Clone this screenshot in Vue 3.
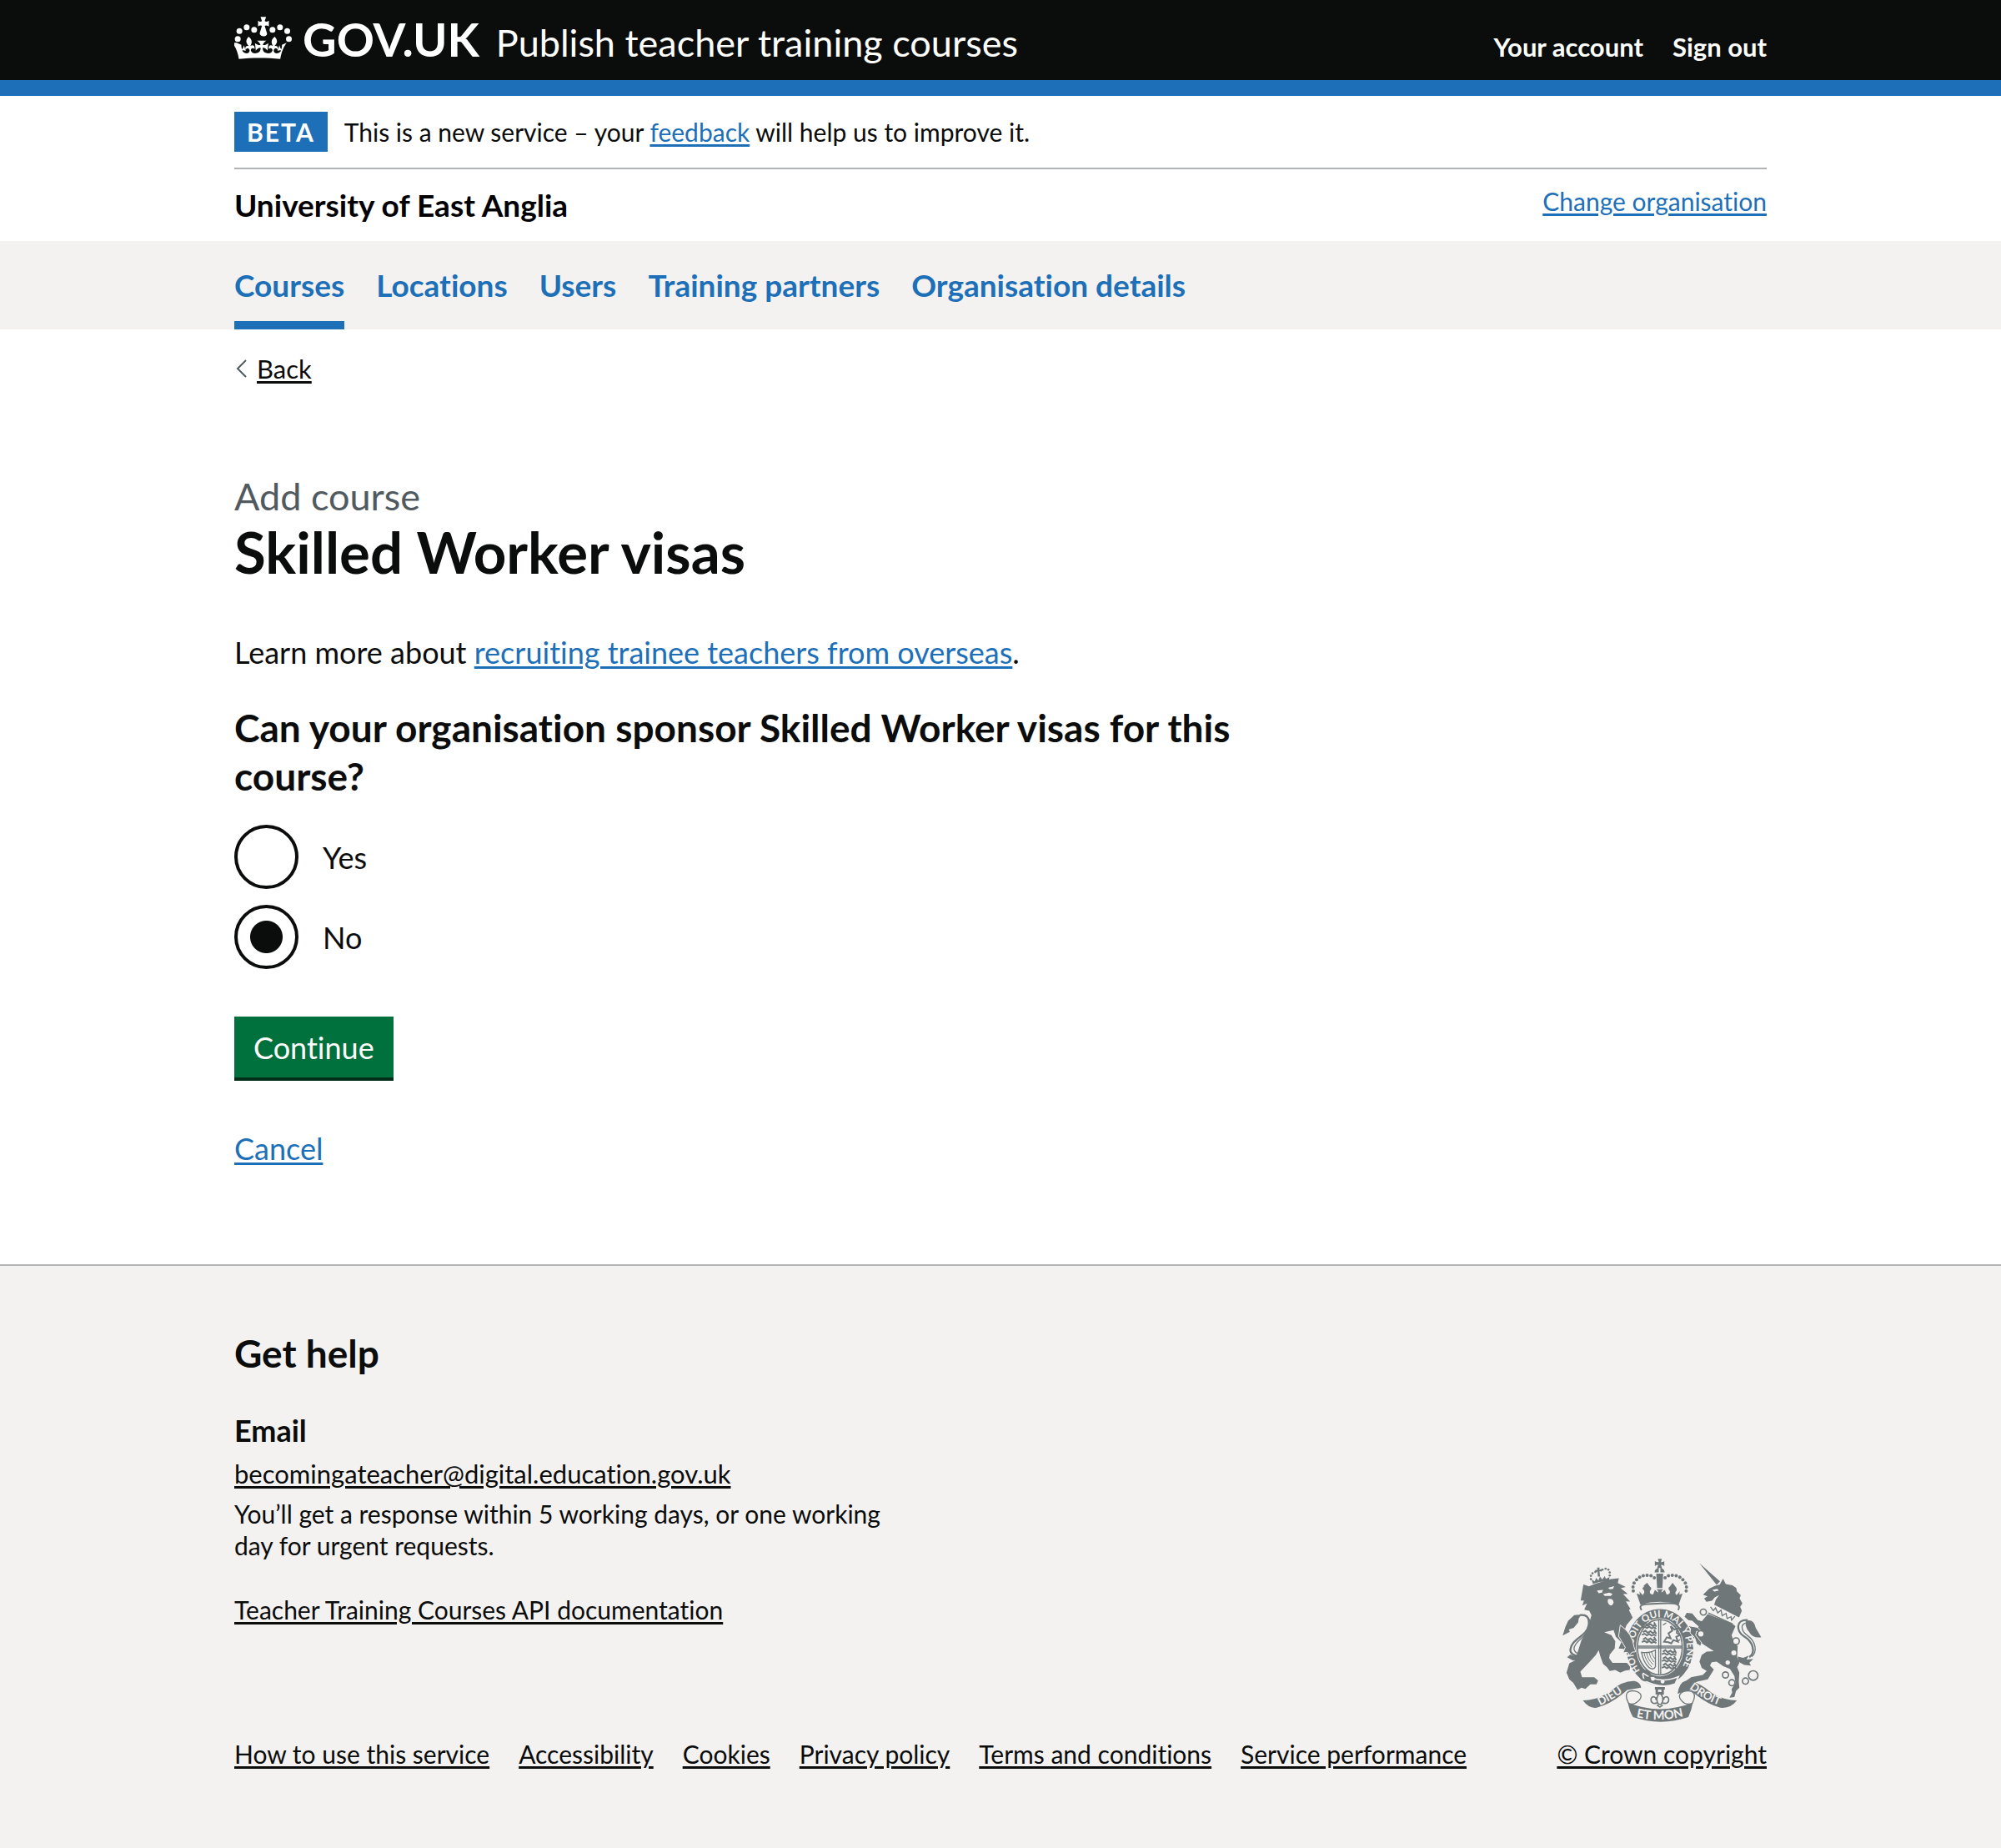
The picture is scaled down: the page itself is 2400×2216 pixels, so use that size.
<script setup>
import { ref } from 'vue'

const navItems = ['Courses', 'Locations', 'Users', 'Training partners', 'Organisation details']
const current = ref('Courses')
const footerLinks = [
  'How to use this service',
  'Accessibility',
  'Cookies',
  'Privacy policy',
  'Terms and conditions',
  'Service performance'
]
const sponsor = ref('no')

const crownPearls = [[74, 141], [80, 113], [106, 99], [133, 108]]
const archPearls = [
  [327, 167], [326, 152], [330, 138], [339, 126], [350, 117], [363, 112], [377, 110], [391, 112], [403, 119]
]
const lionCrownPearls = [
  [174, 124], [174, 112], [180, 103], [190, 98], [216, 90], [227, 86], [237, 90], [242, 100], [242, 111]
]
const chain = [
  [580, 243, 11], [571, 322, 12], [698, 348, 12], [660, 470, 11], [683, 498, 11], [732, 492, 11], [760, 472, 17]
]
const lions = [[362, 290], [362, 316], [362, 342], [434, 386], [434, 411], [434, 435]]
</script>

<template>
  <div class="page">
    <header class="header">
      <div class="container header-row">
        <a class="logo" href="#">
          <svg class="crown" viewBox="62 61 209 153" aria-hidden="true">
            <g fill="#fff">
              <template v-for="p in crownPearls" :key="p[0]">
                <circle :cx="p[0]" :cy="p[1]" r="10.5" />
                <circle :cx="332 - p[0]" :cy="p[1]" r="10.5" />
              </template>
              <path d="M156 62h20l-5 15c5 3 9 2 15-2v21c-6-4-10-5-15-2l8 26c3 15-26 15-26 0l8-26c-5-3-9-2-14 2V75c5 4 9 5 14 2z" />
              <path d="M70 155l17 7c0 7 0 12 3 16 3-4 5-9 6-14l7 20c-6-2-10-3-13-1 6 9 16 12 23 8 5-4 5-11 0-15-4-2-8-1-11 4-3-10 3-16 12-13-12-12-12-22-1-34 13 10 14 21 6 34 9-7 18-2 15 10-6-6-13-2-13 5 1 10 14 14 25 9 8-4 11-11 10-18-6-1-12 3-17 10l-3-27c7 6 13 8 20 7-2-7-7-12-13-16h34c-6 4-11 9-13 16 7 1 13-1 20-7l-3 27c-5-7-11-11-17-10-1 7 2 14 10 18 11 5 24 1 25-9 0-7-7-11-13-5-3-12 6-17 15-10-8-13-7-24 6-34 11 12 11 22-1 34 9-3 15 3 12 13-3-5-7-6-11-4-5 4-5 11 0 15 7 4 17 1 23-8-3-2-7-1-13 1l7-20c1 5 3 10 6 14 3-4 3-9 3-16l17-7c-10 13-19 33-23 58-48-5-101-5-149 0-4-25-13-45-24-58z" />
            </g>
          </svg>
          <span class="logo-text">GOV.UK</span>
        </a>
        <a class="service" href="#">Publish teacher training courses</a>
        <nav class="account" aria-label="Account">
          <a href="#">Your account</a>
          <a href="#">Sign out</a>
        </nav>
      </div>
    </header>

    <div class="container">
      <div class="phase">
        <strong class="tag">BETA</strong>
        <span>This is a new service – your <a class="link" href="#">feedback</a> will help us to improve it.</span>
      </div>
      <div class="organisation">
        <strong class="organisation-name">University of East Anglia</strong>
        <a class="link small" href="#">Change organisation</a>
      </div>
    </div>

    <nav class="primary" aria-label="Primary">
      <div class="container primary-list">
        <a
          v-for="item in navItems"
          :key="item"
          href="#"
          :class="{ active: item === current }"
          @click.prevent="current = item"
        >{{ item }}</a>
      </div>
    </nav>

    <div class="container">
      <div class="back">
        <svg class="chevron" viewBox="0 0 13 22" aria-hidden="true">
          <path d="M12 1L2 11l10 10" fill="none" stroke="#505a5f" stroke-width="2" />
        </svg>
        <a href="#">Back</a>
      </div>

      <main class="main">
        <h1>
          <span class="caption">Add course</span>
          Skilled Worker visas
        </h1>
        <p class="intro">Learn more about <a class="link" href="#">recruiting trainee teachers from overseas</a>.</p>
        <form @submit.prevent>
          <fieldset>
            <legend>Can your organisation sponsor Skilled Worker visas for this course?</legend>
            <div class="radios">
              <div class="radio">
                <input id="sponsor-yes" v-model="sponsor" type="radio" name="sponsor" value="yes">
                <label for="sponsor-yes">Yes</label>
              </div>
              <div class="radio">
                <input id="sponsor-no" v-model="sponsor" type="radio" name="sponsor" value="no">
                <label for="sponsor-no">No</label>
              </div>
            </div>
          </fieldset>
          <button type="submit">Continue</button>
        </form>
        <p><a class="link" href="#">Cancel</a></p>
      </main>
    </div>

    <footer class="footer">
      <div class="container footer-row">
        <div>
          <h2>Get help</h2>
          <h3>Email</h3>
          <p class="email"><a href="#">becomingateacher@digital.education.gov.uk</a></p>
          <p class="response">You’ll get a response within 5 working days, or one working day for urgent requests.</p>
          <p><a href="#">Teacher Training Courses API documentation</a></p>
          <div class="footer-links">
            <a v-for="link in footerLinks" :key="link" href="#">{{ link }}</a>
          </div>
        </div>
        <div class="copyright">
          <svg class="crest" viewBox="72 50 718 590" aria-hidden="true">
            <defs>
              <path id="garter-line" d="M352 454A97 115 0 1 1 490 460" />
              <path id="scroll-left" d="M207 580Q256 558 308 519" />
              <path id="scroll-right" d="M529 518Q586 563 648 583" />
              <path id="scroll-mid" d="M338 622Q423 642 512 618" />
            </defs>
            <g fill="#6f7779">
              <!-- lion -->
              <path d="M167 150l24-10 56-16 28-3-4 17 29 14-18 5 25 20-17 1 26 27-16-1 17 28-6 3 14 28-22 26-8 20 16 32 22 6 2 26-12 12-12-9-10 14-9-14-18-2 10-22-20-20-8-24-34 8 26 10 14 22-2 26-18 22-2 14 12 16 52 0 12 14-2 12-16 2-18 8-18-10-20 4-10-14-14-12-10-28-6-22-10 18-24 26-32 34 6 20 44 0 14 12-6 14-22 0-18 16-14-4-14 8-16-26-14-12-10-24 10-34 20-10 12-36 12-38 22-40 14-50-8-16-18-4 10-22-17 7 6-18-12 0 10-58z" />
              <path d="M72 328l10-32 10-22 22-20 26-2-10 14-2 14-16 20-18 6 4 8z" />
              <path d="M100 396l14 6 18-8 14 8-12 4 6 6-30 6-22-12z" />
              <!-- lion crown -->
              <path d="M181 141l-4-15 11 6 5-13 8 10 6-14 8 10 9-12 4 10 13-6-1 15q-30-2-59 9z" />
              <path d="M196 82h10l-2 8 9-2v9l-8-2 2 20h-8l-1-18-8 3v-9l8 0z" />
              <!-- unicorn -->
              <path d="M565 66l75 66-12 13z" />
              <path d="M579 180l22-22 22-10 16-4 12-22 10 20 24 4 14 10 2 12 14 14-4 12 10 18-8 12 6 14-10 24-90-46 6-18 12-16-16 8-10 12-20 4-8-12 12-8z" />
              <path d="M596 250l88 34 12 10-14 32 6 20 16 20-2 40 8 20-8 16 8 20-2 32 2 22-12 12-6 22-18 2 10-18-2-14 14-20-4-26-16-26-24-10-24-16-18 2-6 12 14 14-22 36-38 8-26 14-34 2 12-14 26-18 42-8 14-14-18-12-8-22 8-24 18-12 26-2-50-32-14-16-16 4 4 20-10 14-12-12 2-14-18-10 6-14 20-14 28-2 8-22z" />
              <path d="M598 300l-36-6-22-20-14-2-14-12 8-14 20 2 20 24 34 10z" />
              <path d="M733 274q30-8 36 26l20 34q-32 4-44-20-16-18-12-40z" />
              <path d="M704 404l20 4 20-8-8 14 24-2-14 14 6 10-24-2-22-12z" />
              <!-- imperial crown -->
              <path d="M405 59q8 5 14 4l-3-12h14l-3 12q6 1 12-4v18q-6-5-12-4l4 11h-18l4-11q-6-1-12 4zM404 100q0-14 15-17v17zM425 83q15 3 15 17h-15zM410 104h25l-3 52h-19z" />
              <path d="M339 176l12 4-2-12 12 14q12-14 0-22-2-7 4-7l0-6 12-10 10 14q10 6 0 16-2 14 12 12l6-16 12 10q2-6-6-12h24q-8 6-6 12l12-10 6 16q14 2 12-12-10-10 0-16l10-14 12 16q6 6 2 13-8 8 0 16l12-14-2 12 12-4-14 40q-68-20-138 0z" />
            </g>
            <g fill="none" stroke="#6f7779">
              <path d="M135 254q36-4 31 36c-6 42-62 48-66 88-2 20 20 24 40 26" stroke-width="7" />
              <path d="M149 252q26 12 22 40c-10 42-60 56-58 86q8 20 28 12" stroke-width="4" />
              <path d="M740 272c-44-4-42 42-14 58 34 20 44 58 20 76" stroke-width="7" />
              <path d="M732 282c-24 10-8 36 8 46 30 22 36 60 14 76" stroke-width="4" />
              <path d="M357 236c-14-24 6-20 66-24s78 2 66 24" stroke-width="6" fill="#f3f2f1" />
            </g>
            <g fill="#6f7779">
              <template v-for="p in archPearls" :key="p[0]">
                <circle :cx="p[0]" :cy="p[1]" r="6" />
                <circle :cx="845 - p[0]" :cy="p[1]" r="6" />
              </template>
              <circle v-for="(p, i) in lionCrownPearls" :key="i" :cx="p[0]" :cy="p[1]" r="4" />
            </g>

            <!-- garter and shield -->
            <ellipse cx="423" cy="370" rx="123" ry="140" fill="#6f7779" stroke="#f3f2f1" stroke-width="4" />
            <ellipse cx="423" cy="370" rx="86" ry="105" fill="#f3f2f1" />
            <ellipse cx="423" cy="370" rx="81" ry="100" fill="none" stroke="#6f7779" stroke-width="5" />
            <g fill="none" stroke="#6f7779" stroke-width="4">
              <path d="M419 272v196M426 272v196M343 366h160M343 372h160" />
              <path
                v-for="(l, i) in lions"
                :key="i"
                :d="`M${l[0]} ${l[1]}l9-6 8 8 10-6 8 7 10-5M${l[0] - 4} ${l[1] + 9}l10-4 8 6 9-5 8 6 9-4 8 5M${l[0] + 40} ${l[1] - 10}l8 16`"
                stroke-width="6"
              />
              <path d="M438 350l10-16 14 4-8-18 14-10-6-16 14 12 10-4-2 16 12 8-14 6 6 18-16-6-8 12-10-4z" stroke-width="6" />
              <path d="M357 388q30 4 50-8v60q-6 14-22 4-22-20-28-56z" />
              <path d="M366 390q4 26 28 52M375 389q2 22 24 44M384 388q2 18 18 36M393 386q2 12 12 26" stroke-width="3" />
              <path d="M434 290l12-8M482 296l-10-6M486 350l10-8" />
            </g>
            <text class="motto" font-size="35"><textPath href="#garter-line">HONI SOIT QUI MAL Y PENSE</textPath></text>
            <path d="M360 462q60 44 130 14l-12 26q-50 20-112-12z" fill="#6f7779" stroke="#f3f2f1" stroke-width="5" />
            <circle cx="370" cy="472" r="17" fill="none" stroke="#6f7779" stroke-width="8" />
            <circle cx="398" cy="484" r="7" fill="#f3f2f1" />
            <circle cx="433" cy="494" r="7" fill="#f3f2f1" />
            <!-- forepaws over the garter -->
            <path d="M280 290q44 30 50 80l6 16-14 2-8 10-8-10-16 2 8-20-24-40z" fill="#6f7779" stroke="#f3f2f1" stroke-width="3" />
            <path d="M524 292l34 6 22 20-24-6-4 14 22 28-4 12-14-8-8-24-16-16 2-16z" fill="#6f7779" stroke="#f3f2f1" stroke-width="3" />

            <!-- light details -->
            <g fill="#f3f2f1">
              <path d="M196 165l22-2-4 10-12 2zM236 155l22-6-4 10-12 2zM218 178l22-5 12 4-6 8h-22zM236 196q18-4 20 12-4 14-14 10-10-8-6-22z" />
              <path d="M612 163l18-4 6 6-16 4zM608 218l92 46-10 24-92-40z" />
              <circle cx="690" cy="390" r="9" />
              <circle cx="668" cy="425" r="8" />
            </g>
            <path d="M606 224l10 14 8-10 8 18 12-10 4 20 14-8 4 18 14-6 2 12 12-14M598 246l88 40" fill="none" stroke="#6f7779" stroke-width="4" />
            <circle
              v-for="c in chain"
              :key="c[0]"
              :cx="c[0]"
              :cy="c[1]"
              :r="c[2]"
              fill="#f3f2f1"
              stroke="#6f7779"
              stroke-width="5"
            />

            <!-- plant badge -->
            <g fill="none" stroke="#6f7779" stroke-width="5">
              <path d="M405 518h36M412 522v14h21v-14" stroke-width="9" />
              <path d="M423 534q-20 22-4 42h8q16-20-4-42zM414 570c-16 8-26-4-22-16 6-10 20-4 16 6M432 570c16 8 26-4 22-16-6-10-20-4-16 6M412 578l11 8 11-8" />
            </g>

            <!-- scrolls -->
            <g fill="#6f7779">
              <path d="M145 562q60-2 102-36 44-36 84-34 22 4 24 24l-50 8q-54 50-110 64-28 4-50-26z" />
              <path d="M701 562q-60-2-102-36-44-36-84-34-22 4-28 46l46-14q54 50 108 64 38 4 60-26z" />
              <path d="M308 570q114 46 234 0-4 26-16 52-100 34-200 0-14-24-18-52z" />
            </g>
            <g fill="#f3f2f1" stroke="#6f7779" stroke-width="4">
              <path d="M310 572c-20-38 0-48 24-44 26 6 30 26 0 44-8 4-16 4-24 0z" />
              <path d="M540 572c20-38-2-48-24-44-28 6-30 26-4 44 10 4 18 4 28 0z" />
            </g>
            <text class="motto" font-size="40"><textPath href="#scroll-left">DIEU</textPath></text>
            <text class="motto" font-size="40"><textPath href="#scroll-right">DROIT</textPath></text>
            <text class="motto" font-size="44"><textPath href="#scroll-mid">ET MON</textPath></text>
          </svg>
          <a href="#">© Crown copyright</a>
        </div>
      </div>
    </footer>
  </div>
</template>

<style>
body {
  margin: 0;
  background: #f3f2f1;
}
</style>

<style scoped>
.page {
  background: #fff;
  color: #0b0c0c;
  font-family: Lato, "Liberation Sans", sans-serif;
  font-size: 36px;
  font-variant-ligatures: none;
  line-height: 48px;
}

.container {
  max-width: 1838px;
  margin: 0 auto;
}

h1, h2, h3, p, fieldset {
  margin: 0;
  padding: 0;
  border: 0;
}

a {
  color: inherit;
  text-decoration-thickness: 3px;
  text-underline-offset: 3px;
}

.link {
  color: #1d70b8;
}

.small {
  font-size: 30px;
  line-height: 38px;
}

.header {
  background: #0b0c0c;
  border-bottom: 19px solid #1d70b8;
  color: #fff;
}

.header a {
  text-decoration: none;
}

.header-row {
  display: flex;
  align-items: baseline;
  padding: 17px 0 19px;
  line-height: 38px;
}

.logo {
  display: flex;
  margin-right: 20px;
  line-height: 60px;
}

.crown {
  width: 70px;
  height: 51px;
  margin: 3px 12px 0 0;
}

.logo-text {
  align-self: baseline;
  font-size: 56px;
  font-weight: 700;
}

.service {
  font-size: 45px;
}

.account {
  display: flex;
  gap: 35px;
  margin-left: auto;
  font-size: 31px;
  font-weight: 700;
}

.phase {
  display: flex;
  align-items: center;
  gap: 20px;
  padding: 19px 0;
  border-bottom: 2px solid #b1b4b6;
  font-size: 30px;
}

.tag {
  padding: 0 15px;
  background: #1d70b8;
  color: #fff;
  letter-spacing: 2px;
}

.organisation {
  display: flex;
  justify-content: space-between;
  align-items: flex-start;
  padding: 19px 0;
}

.organisation-name {
  color: #000;
  font-size: 37px;
}

.primary {
  background: #f3f2f1;
}

.primary-list {
  display: flex;
  gap: 38px;
}

.primary a {
  padding: 29px 0;
  color: #1d70b8;
  font-size: 37px;
  font-weight: 700;
  text-decoration: none;
}

.primary .active {
  box-shadow: inset 0 -10px #1d70b8;
}

.back {
  display: flex;
  align-items: center;
  gap: 12px;
  padding: 28px 0 0 2px;
  font-size: 31px;
  line-height: 38px;
}

.chevron {
  width: 13px;
  height: 22px;
}

.main {
  max-width: 1206px;
  padding: 105px 0 115px;
}

h1 {
  margin-bottom: 58px;
  font-size: 69px;
  line-height: 76px;
}

.caption {
  display: block;
  color: #505a5f;
  font-size: 45px;
  font-weight: 400;
  line-height: 58px;
}

.intro {
  margin-bottom: 38px;
}

legend {
  margin-bottom: 29px;
  padding: 0;
  font-size: 46px;
  font-weight: 700;
  line-height: 58px;
}

.radios {
  display: flex;
  flex-direction: column;
  gap: 19px;
}

.radio {
  display: flex;
  align-items: center;
  gap: 29px;
}

.radio input {
  flex: none;
  width: 77px;
  height: 77px;
  margin: 0;
  border: 4px solid #0b0c0c;
  border-radius: 50%;
  appearance: none;
}

.radio input:checked {
  background: radial-gradient(circle, #0b0c0c 19px, transparent 20px);
}

button {
  display: block;
  margin: 57px 0 61px;
  padding: 13px 23px 12px;
  border: 0;
  background: #00703c;
  box-shadow: 0 4px 0 #002d18;
  color: #fff;
  font: inherit;
  font-variant-ligatures: none;
}

.footer {
  padding: 76px 0 96px;
  border-top: 2px solid #b1b4b6;
  background: #f3f2f1;
  font-size: 30px;
  line-height: 38px;
}

.footer-row {
  display: flex;
  justify-content: space-between;
  align-items: flex-end;
}

h2 {
  margin-bottom: 39px;
  font-size: 46px;
  line-height: 58px;
}

h3 {
  margin-bottom: 9px;
  font-size: 36px;
  line-height: 48px;
}

.email {
  font-size: 31px;
}

.response {
  max-width: 800px;
  margin: 10px 0 39px;
}

.footer-links {
  display: flex;
  flex-wrap: wrap;
  gap: 10px 35px;
  margin-top: 135px;
}

.copyright {
  display: flex;
  flex-direction: column;
  align-items: center;
  gap: 19px;
}

.crest {
  width: 239px;
  height: 196px;
}

.motto {
  fill: #f3f2f1;
  font-weight: 700;
}
</style>
